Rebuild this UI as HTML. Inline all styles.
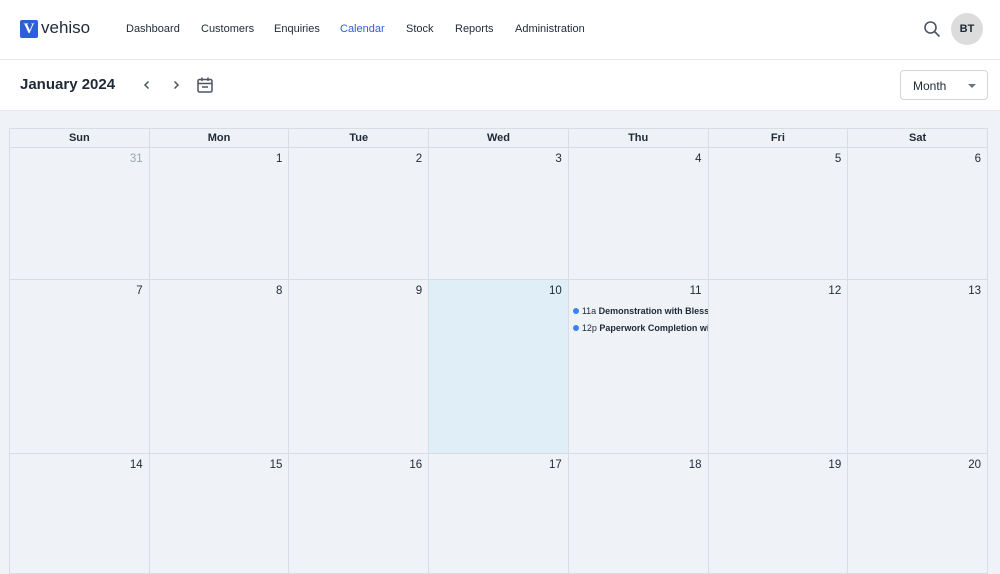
<!DOCTYPE html>
<html><head><style>
*{box-sizing:border-box;margin:0;padding:0}
body{width:1000px;height:562px;overflow:hidden;background:#eff2f7;font-family:"Liberation Sans",sans-serif;color:#1f2937;position:relative}
.hdr{position:absolute;left:0;top:0;width:1000px;height:60px;background:#fff;border-bottom:1px solid #e5e7eb}
.logo{position:absolute;left:20px;top:20px;width:18px;height:18px;background:#2f5fd6;border-radius:2px;color:#fff;font:bold 15px "Liberation Serif",serif;text-align:center;line-height:18px}
.brand{position:absolute;left:41px;top:18px;font-size:17px;color:#1f2937}
.nav{position:absolute;top:23px;font-size:11px;color:#1f2937;font-weight:500}
.tb{position:absolute;left:0;top:60px;width:1000px;height:51px;background:#fff;border-bottom:1px solid #e5e7eb}
.title{position:absolute;left:20px;top:76px;font-size:15px;font-weight:bold;color:#1f2937}
.sel{position:absolute;left:900px;top:70px;width:88px;height:30px;border:1px solid #d1d5db;border-radius:4px;background:#fff;font-size:12px;padding:8px 0 0 12px}
.av{position:absolute;left:951px;top:13px;width:32px;height:32px;border-radius:50%;background:#dcdcdc;font-size:11px;font-weight:bold;text-align:center;line-height:32px}
table{position:absolute;left:9px;top:128px;width:979px;border-collapse:collapse;table-layout:fixed}
td,th{border:1px solid #d8dce3}
th{height:19px;font-size:11px;font-weight:bold;background:#eef1f6}
td{vertical-align:top;text-align:right;font-size:11.5px;padding:5px 6px 4px;background:#eff2f7}
.ev{text-align:left;font-size:9px;white-space:nowrap;overflow:hidden;margin:9px -6px 0 -2px;line-height:10px}
.ev+.ev{margin-top:7px}
.ev i{display:inline-block;width:6px;height:6px;border-radius:50%;background:#3b82f6;margin-right:3px}
</style></head><body>
<div class="hdr"></div>
<div class="logo">V</div><div class="brand">vehiso</div>
<div class="nav" style="left:126px">Dashboard</div>
<div class="nav" style="left:201px">Customers</div>
<div class="nav" style="left:274px">Enquiries</div>
<div class="nav" style="left:340px;color:#2f5fd6">Calendar</div>
<div class="nav" style="left:406px">Stock</div>
<div class="nav" style="left:455px">Reports</div>
<div class="nav" style="left:515px">Administration</div>
<svg style="position:absolute;left:923px;top:20px" width="18" height="18" viewBox="0 0 18 18" fill="none" stroke="#4b5563" stroke-width="1.6"><circle cx="7.5" cy="7.5" r="5.5"/><path d="M11.5 11.5l5 5"/></svg>
<div class="av">BT</div>
<div class="tb"></div>
<div class="title">January 2024</div>
<svg style="position:absolute;left:141px;top:79px" width="12" height="12" viewBox="0 0 12 12" fill="none" stroke="#4b5563" stroke-width="1.5"><path d="M7.5 2.5L4 6l3.5 3.5"/></svg>
<svg style="position:absolute;left:170px;top:79px" width="12" height="12" viewBox="0 0 12 12" fill="none" stroke="#4b5563" stroke-width="1.5"><path d="M4.5 2.5L8 6l-3.5 3.5"/></svg>
<svg style="position:absolute;left:196px;top:76px" width="18" height="18" viewBox="0 0 18 18" fill="none" stroke="#4b5563" stroke-width="1.5"><rect x="2" y="3.5" width="14" height="12.5" rx="1.5"/><path d="M2 7.5h14M6 1.5v3.5M12 1.5v3.5M6 11h6"/></svg>
<div class="sel">Month<svg style="position:absolute;left:67px;top:13px" width="8" height="5"><path d="M0 0h8L4 4z" fill="#6b7280"/></svg></div>
<table>
<tr><th>Sun</th><th>Mon</th><th>Tue</th><th>Wed</th><th>Thu</th><th>Fri</th><th>Sat</th></tr>
<tr style="height:132px"><td style="color:#9ca3af">31</td><td>1</td><td>2</td><td>3</td><td>4</td><td>5</td><td>6</td></tr>
<tr style="height:174px"><td>7</td><td>8</td><td>9</td><td style="background:#e0eff7">10</td><td>11<div class="ev"><i></i>11a <b>Demonstration with Blessing</b></div><div class="ev"><i></i>12p <b>Paperwork Completion with</b></div></td><td>12</td><td>13</td></tr>
<tr style="height:120px"><td>14</td><td>15</td><td>16</td><td>17</td><td>18</td><td>19</td><td>20</td></tr>
</table>
</body></html>
